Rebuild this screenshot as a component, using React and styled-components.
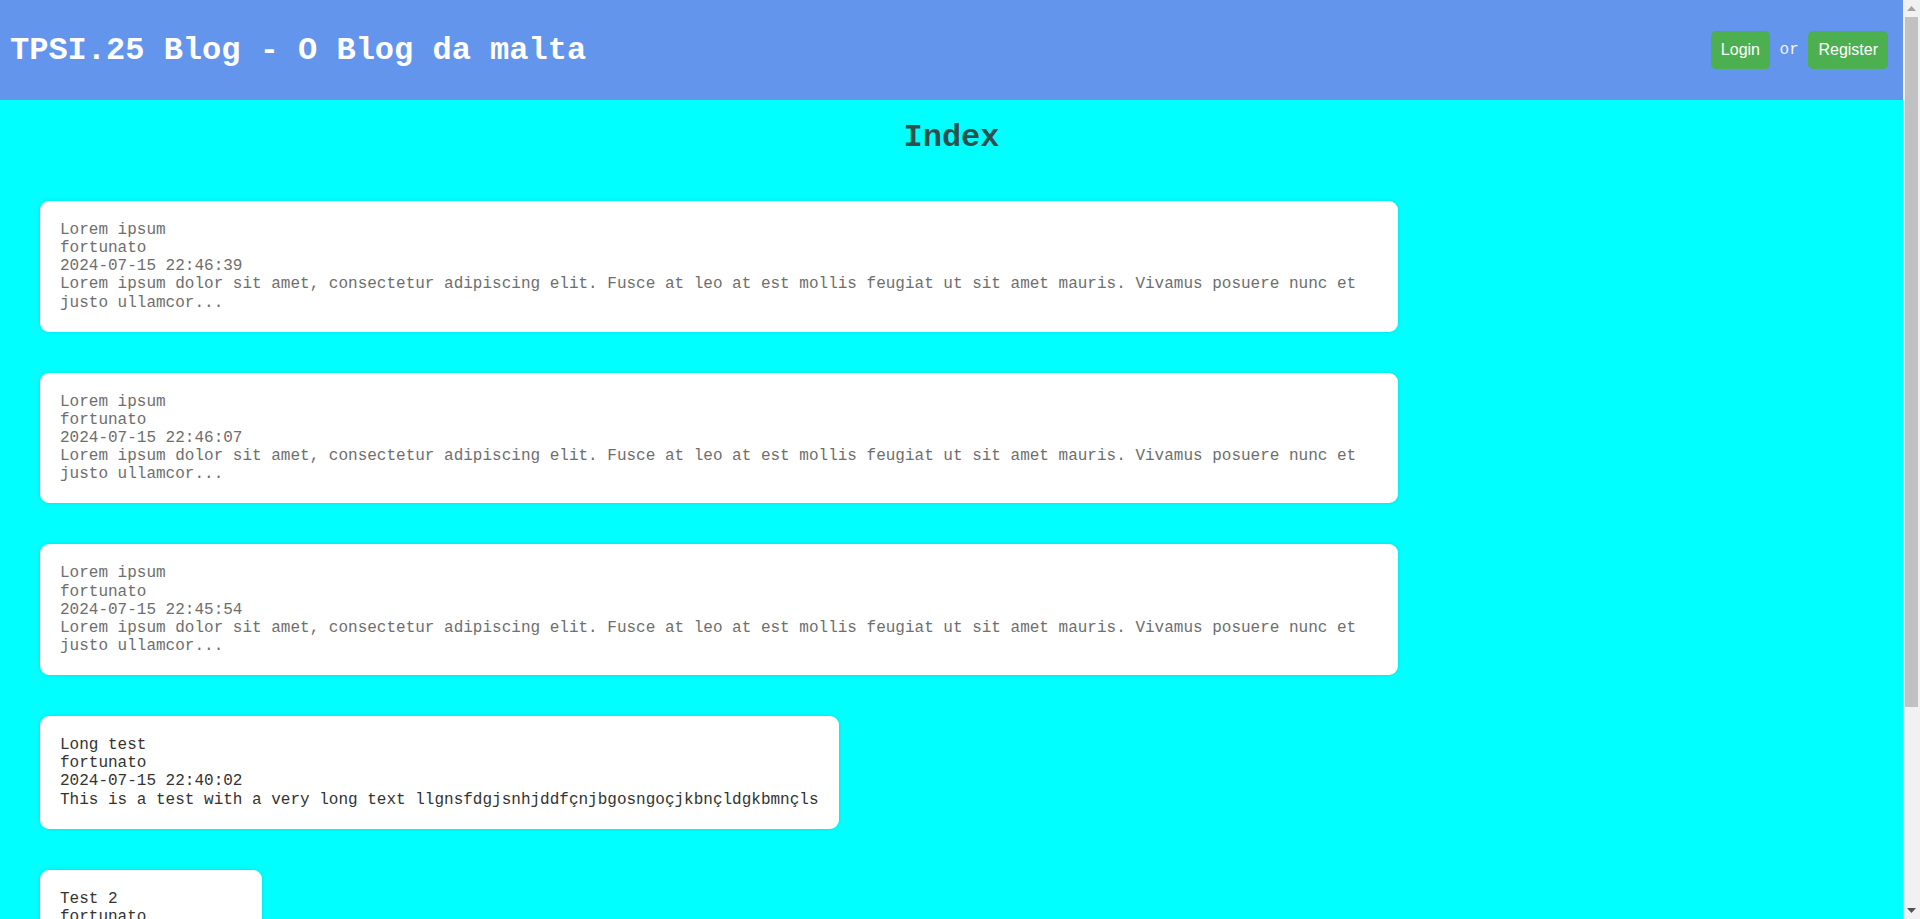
import React from "react";
import styled, { createGlobalStyle } from "styled-components";

const GlobalStyle = createGlobalStyle`
  html, body {
    margin: 0;
    padding: 0;
    background: #00ffff;
    font-family: "Liberation Mono", "Courier New", monospace;
  }
`;

const Page = styled.div`
  padding-right: 17px;
`;

const Header = styled.header`
  height: 100px;
  background: #6495ed;
  display: flex;
  align-items: center;
  justify-content: space-between;
  padding: 0 15px 0 10px;
`;

const Title = styled.h1`
  margin: 0;
  font-family: "Liberation Mono", "Courier New", monospace;
  font-size: 32px;
  font-weight: bold;
  color: #ffffff;
`;

const Auth = styled.div`
  display: flex;
  align-items: center;
  font-family: "Liberation Mono", "Courier New", monospace;
  font-size: 16px;
  color: #f4f4f4;
  white-space: pre;
`;

const Button = styled.a`
  display: inline-block;
  background: #4caf50;
  color: #ffffff;
  font-family: "Liberation Sans", Arial, sans-serif;
  font-size: 16px;
  line-height: 18px;
  padding: 10px 10px;
  border-radius: 5px;
  text-decoration: none;
  cursor: pointer;
`;

const Main = styled.main`
  padding: 20px 40px 40px;
`;

const PageTitle = styled.h2`
  margin: 0 0 45px;
  text-align: center;
  font-family: "Liberation Mono", "Courier New", monospace;
  font-size: 32px;
  line-height: 36px;
  font-weight: bold;
  color: #2f4f4f;
`;

const PostList = styled.div`
  display: flex;
  flex-direction: column;
  align-items: flex-start;
  gap: 41px;
`;

const Card = styled.article`
  box-sizing: border-box;
  max-width: 1358px;
  background: #ffffff;
  border-radius: 9px;
  padding: 20px;
  box-shadow: 0 0 4px rgba(0, 0, 0, 0.12);
  font-family: "Liberation Mono", "Courier New", monospace;
  font-size: 16px;
  line-height: 18.14px;
  color: ${(p) => p.$color || "#6e6e6e"};
`;

const Line = styled.div``;

/* imitation of the browser's classic scrollbar, lying over the right edge */
const Scrollbar = styled.div`
  position: fixed;
  top: 0;
  right: 0;
  width: 17px;
  height: 100vh;
  background: #f1f1f1;
  display: flex;
  flex-direction: column;
  align-items: center;
`;

const Arrow = styled.div`
  height: 17px;
  width: 17px;
  display: flex;
  align-items: center;
  justify-content: center;
`;

const Thumb = styled.div`
  width: 13px;
  height: 690px;
  background: #c1c1c1;
`;

const Track = styled.div`
  flex: 1;
`;

const posts = [
  {
    title: "Lorem ipsum",
    author: "fortunato",
    date: "2024-07-15 22:46:39",
    body: "Lorem ipsum dolor sit amet, consectetur adipiscing elit. Fusce at leo at est mollis feugiat ut sit amet mauris. Vivamus posuere nunc et justo ullamcor...",
  },
  {
    title: "Lorem ipsum",
    author: "fortunato",
    date: "2024-07-15 22:46:07",
    body: "Lorem ipsum dolor sit amet, consectetur adipiscing elit. Fusce at leo at est mollis feugiat ut sit amet mauris. Vivamus posuere nunc et justo ullamcor...",
  },
  {
    title: "Lorem ipsum",
    author: "fortunato",
    date: "2024-07-15 22:45:54",
    body: "Lorem ipsum dolor sit amet, consectetur adipiscing elit. Fusce at leo at est mollis feugiat ut sit amet mauris. Vivamus posuere nunc et justo ullamcor...",
  },
  {
    title: "Long test",
    author: "fortunato",
    date: "2024-07-15 22:40:02",
    body: "This is a test with a very long text llgnsfdgjsnhjddfçnjbgosngoçjkbnçldgkbmnçls",
    color: "#333333",
  },
  {
    title: "Test 2",
    author: "fortunato",
    date: "2024-07-15 22:38:41",
    body: "Another test",
    color: "#333333",
  },
  {
    title: "Test 1",
    author: "fortunato",
    date: "2024-07-15 22:37:12",
    body: "First test",
    color: "#333333",
  },
];

export default function App() {
  return (
    <>
      <GlobalStyle />
      <Page>
        <Header>
          <Title>TPSI.25 Blog - O Blog da malta</Title>
          <Auth>
            <Button>Login</Button>
            {" or "}
            <Button>Register</Button>
          </Auth>
        </Header>
        <Main>
          <PageTitle>Index</PageTitle>
          <PostList>
            {posts.map((p, i) => (
              <Card key={i} $color={p.color}>
                <Line>{p.title}</Line>
                <Line>{p.author}</Line>
                <Line>{p.date}</Line>
                <Line>{p.body}</Line>
              </Card>
            ))}
          </PostList>
        </Main>
      </Page>
      <Scrollbar aria-hidden="true">
        <Arrow>
          <svg width="9" height="5" viewBox="0 0 9 5">
            <polygon points="0,5 9,5 4.5,0" fill="#a3a3a3" />
          </svg>
        </Arrow>
        <Thumb />
        <Track />
        <Arrow>
          <svg width="9" height="5" viewBox="0 0 9 5">
            <polygon points="0,0 9,0 4.5,5" fill="#505050" />
          </svg>
        </Arrow>
      </Scrollbar>
    </>
  );
}
